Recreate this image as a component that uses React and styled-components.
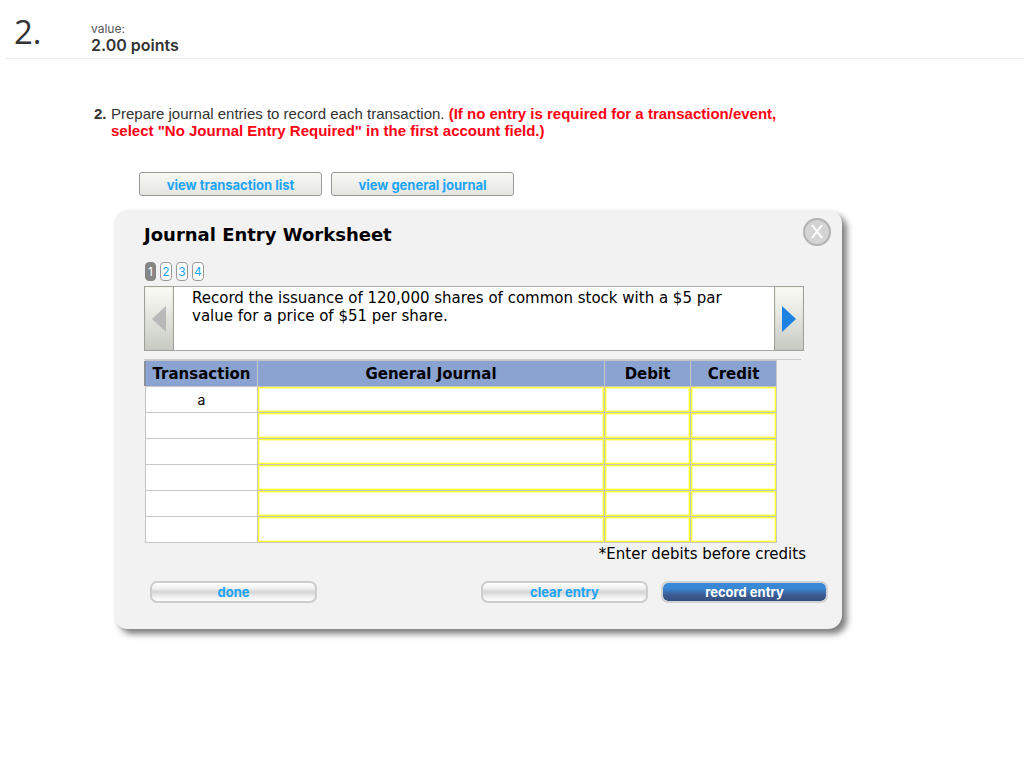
import React from 'react';
import styled, { createGlobalStyle, css } from 'styled-components';

const Global = createGlobalStyle`
  * { box-sizing: border-box; }
  body { margin: 0; background: #fff; color: #000; font-family: "Liberation Sans", Arial, sans-serif; }
  button, input { font: inherit; margin: 0; }
`;

const verdana = '"DejaVu Sans", Verdana, sans-serif';

const Header = styled.header`
  display: flex;
  align-items: flex-start;
  height: 59px;
  margin-left: 6px;
  padding-left: 8px;
  border-bottom: 1px solid #ececec;
  color: #333;
`;

const Number = styled.h1`
  flex: 0 0 77px;
  margin: 12px 0 0;
  font: 500 33px/40px "Open Sans", sans-serif;
`;

const Points = styled.div`
  padding-top: 21px;
  font: 600 16px/16px Inter, sans-serif;
`;

const PointsLabel = styled.div`
  font-size: 12px;
  font-weight: 400;
  line-height: 16px;
  color: #555;
`;

const Main = styled.main`
  padding: 46px 24px 40px 94px;
`;

const Question = styled.div`
  display: flex;
  max-width: 690px;
  font-size: 15px;
  line-height: 17px;
  color: #333;
`;

const Marker = styled.b`
  flex: 0 0 17px;
`;

const QuestionText = styled.p`
  margin: 0;
`;

const Warning = styled.strong`
  color: #ff0012;
`;

const Views = styled.div`
  display: flex;
  gap: 9px;
  margin: 33px 0 14px 45px;
`;

const BaseButton = styled.button`
  padding: 0;
  font: 700 13px/16px Inter, sans-serif;
  color: #1ba5f8;
  cursor: pointer;
`;

const ViewButton = styled(BaseButton)`
  width: 183px;
  height: 24px;
  padding-top: 2px;
  border: 1px solid #999;
  border-radius: 3px;
  background: linear-gradient(#f8f8f5, #e4e4e0);
`;

const Panel = styled.section`
  max-width: 728px;
  margin-left: 20px;
  padding: 8px 11px 26px 30px;
  border-radius: 14px;
  background: #f2f2f2;
  box-shadow: 5px 5px 6px rgba(0, 0, 0, 0.5);
  font-family: ${verdana};
`;

const PanelHead = styled.div`
  display: flex;
  justify-content: space-between;
  align-items: flex-start;
`;

const Title = styled.h2`
  margin: 4px 0 0;
  font-size: 18px;
  line-height: 25px;
`;

const Close = styled.button`
  width: 28px;
  height: 28px;
  padding: 0;
  border: 0;
  background: none;
  cursor: pointer;
  svg { display: block; }
`;

const Pager = styled.nav`
  display: flex;
  gap: 4px;
  margin: 15px 0 5px 1px;
`;

const Page = styled.button`
  width: 12px;
  height: 19px;
  padding: 0;
  border: 1px solid #999;
  border-radius: 4px;
  background: #fff;
  color: #1ba5f8;
  font: 400 12px/16px Inter, sans-serif;
  text-align: center;
  ${(p) => p.$active && css`
    width: 11px;
    border-color: #858585;
    background: #858585;
    color: #fff;
  `}
`;

const Record = styled.div`
  display: flex;
  max-width: 660px;
  height: 65px;
  border: 1px solid #aaa;
  background: #fff;
`;

const Arrow = styled.button`
  display: flex;
  flex: 0 0 30px;
  align-items: center;
  justify-content: center;
  margin: -1px;
  padding: 1px 0 0;
  border: 1px solid #a2a29d;
  box-shadow: inset 0 0 1px #a2a29d;
  background: linear-gradient(#fbfcf6, #c8cac4);
`;

const RecordText = styled.p`
  flex: 1;
  margin: 0;
  padding: 2px 36px 0 19px;
  font-size: 15px;
  line-height: 18px;
`;

const Sheet = styled.div`
  max-width: 657px;
  margin-top: 8px;
  border-top: 1px solid #ccc;
`;

const Table = styled.table`
  width: 632px;
  max-width: 100%;
  margin-left: 1px;
  border-spacing: 1px;
  background: #c6c6c6;
  table-layout: fixed;
  font-size: 15px;
  line-height: 18px;
`;

const Column = styled.col`
  width: ${(p) => p.$width}px;
`;

const HeadCell = styled.th`
  height: 25px;
  padding: 0;
  background: #8aa3d0;
  box-shadow: ${(p) => (p.$first ? '-2px 0 #8a8f99' : 'none')};
`;

const Cell = styled.td`
  height: 25px;
  padding: 0;
  background: #fff;
  text-align: center;
  font: 400 14px/18px Inter, sans-serif;
`;

const Entry = styled.input`
  display: block;
  width: 100%;
  height: 25px;
  padding: 0 4px;
  border: 1px solid #ffff30;
  border-radius: 0;
  outline: 0;
  background: #fff;
  box-shadow: inset 0 0 0 1px #ffffb4;
  font-family: ${verdana};
`;

const Note = styled.p`
  max-width: 662px;
  margin: 1px 0 0;
  font-size: 15px;
  line-height: 20px;
  text-align: right;
`;

const Actions = styled.div`
  display: flex;
  gap: 13px;
  margin: 17px 3px 0 6px;
`;

const Action = styled(BaseButton)`
  width: 167px;
  height: 22px;
  border: 2px solid #cdcdcd;
  border-radius: 7px;
  background: linear-gradient(#fff, #f0f0f0 30%, #d4d4d4 50%, #eee 75%, #fff);
  ${(p) => p.$push && css`margin-right: auto;`}
  ${(p) => p.$primary && css`
    border-color: #d0d2d6;
    background: linear-gradient(#3a8ad8, #3a86d2 30%, #3a5a90 70%, #34507f) padding-box;
    color: #fff;
  `}
`;

const rows = ['a', '', '', '', '', ''];
const fields = ['General Journal', 'Debit', 'Credit'];

export default function App() {
  return (
    <>
      <Global />
      <Header>
        <Number>2.</Number>
        <Points>
          <PointsLabel>value:</PointsLabel>
          2.00 points
        </Points>
      </Header>
      <Main>
        <Question>
          <Marker>2.</Marker>
          <QuestionText>
            Prepare journal entries to record each transaction.{' '}
            <Warning>
              (If no entry is required for a transaction/event, select "No Journal Entry Required" in the first account field.)
            </Warning>
          </QuestionText>
        </Question>
        <Views>
          <ViewButton type="button">view transaction list</ViewButton>
          <ViewButton type="button">view general journal</ViewButton>
        </Views>
        <Panel>
          <PanelHead>
            <Title>Journal Entry Worksheet</Title>
            <Close type="button" aria-label="Close">
              <svg width="28" height="28" viewBox="0 0 28 28">
                <circle cx="14" cy="14" r="13" fill="#d4d4d4" stroke="#b2b2b2" strokeWidth="2" />
                <path d="M9 7L19 20M19 7L9 20" stroke="#fff" strokeWidth="2" />
              </svg>
            </Close>
          </PanelHead>
          <Pager aria-label="Transactions">
            {[1, 2, 3, 4].map((n) => (
              <Page key={n} type="button" $active={n === 1}>{n}</Page>
            ))}
          </Pager>
          <Record>
            <Arrow type="button" aria-label="Previous">
              <svg width="14" height="28" viewBox="0 0 14 28"><path d="M14 1v26L0 14z" fill="#b9b9b9" /></svg>
            </Arrow>
            <RecordText>
              Record the issuance of 120,000 shares of common stock with a $5 par value for a price of $51 per share.
            </RecordText>
            <Arrow type="button" aria-label="Next">
              <svg width="14" height="28" viewBox="0 0 14 28"><path d="M0 1v26l14-13z" fill="#1b82e2" /></svg>
            </Arrow>
          </Record>
          <Sheet>
            <Table>
              <colgroup>
                <Column $width={111} />
                <Column $width={346} />
                <Column $width={85} />
                <Column $width={85} />
              </colgroup>
              <thead>
                <tr>
                  <HeadCell $first>Transaction</HeadCell>
                  {fields.map((f) => <HeadCell key={f}>{f}</HeadCell>)}
                </tr>
              </thead>
              <tbody>
                {rows.map((label, i) => (
                  <tr key={i}>
                    <Cell>{label}</Cell>
                    {fields.map((f) => (
                      <Cell key={f}><Entry aria-label={`${f}, line ${i + 1}`} /></Cell>
                    ))}
                  </tr>
                ))}
              </tbody>
            </Table>
          </Sheet>
          <Note>*Enter debits before credits</Note>
          <Actions>
            <Action type="button" $push>done</Action>
            <Action type="button">clear entry</Action>
            <Action type="button" $primary>record entry</Action>
          </Actions>
        </Panel>
      </Main>
    </>
  );
}
